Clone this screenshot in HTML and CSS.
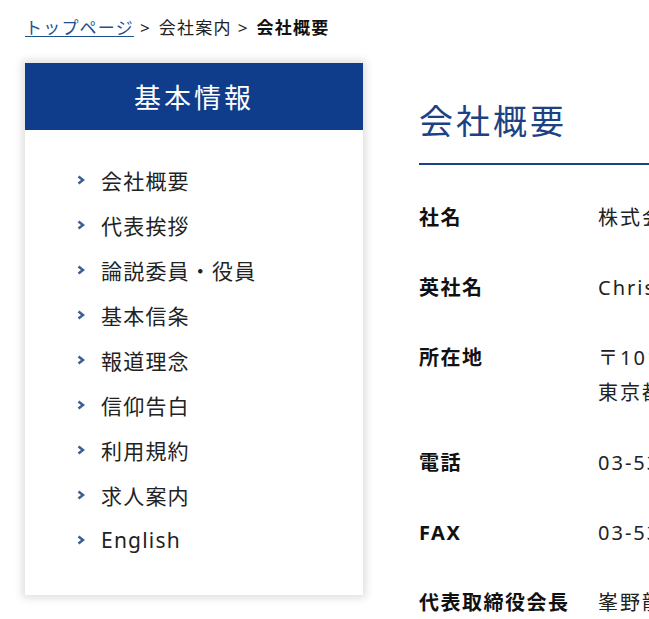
FILE: index.html
```html
<!DOCTYPE html>
<html lang="ja">
<head>
<meta charset="utf-8">
<title>会社概要</title>
<link rel="stylesheet" href="styles.css">
</head>
<body>
<div class="page">
  <nav class="breadcrumb">
    <a href="#" class="crumb-link">トップページ</a><span class="sep">&gt;</span><span>会社案内</span><span class="sep">&gt;</span><strong>会社概要</strong>
  </nav>
  <div class="layout">
    <aside class="sidebar">
      <h2 class="side-title">基本情報</h2>
      <ul class="side-list">
        <li><svg class="chev" viewBox="0 0 8 10"><polyline points="1.5,1.5 6,5 1.5,8.5"/></svg><a href="#">会社概要</a></li>
        <li><svg class="chev" viewBox="0 0 8 10"><polyline points="1.5,1.5 6,5 1.5,8.5"/></svg><a href="#">代表挨拶</a></li>
        <li><svg class="chev" viewBox="0 0 8 10"><polyline points="1.5,1.5 6,5 1.5,8.5"/></svg><a href="#">論説委員・役員</a></li>
        <li><svg class="chev" viewBox="0 0 8 10"><polyline points="1.5,1.5 6,5 1.5,8.5"/></svg><a href="#">基本信条</a></li>
        <li><svg class="chev" viewBox="0 0 8 10"><polyline points="1.5,1.5 6,5 1.5,8.5"/></svg><a href="#">報道理念</a></li>
        <li><svg class="chev" viewBox="0 0 8 10"><polyline points="1.5,1.5 6,5 1.5,8.5"/></svg><a href="#">信仰告白</a></li>
        <li><svg class="chev" viewBox="0 0 8 10"><polyline points="1.5,1.5 6,5 1.5,8.5"/></svg><a href="#">利用規約</a></li>
        <li><svg class="chev" viewBox="0 0 8 10"><polyline points="1.5,1.5 6,5 1.5,8.5"/></svg><a href="#">求人案内</a></li>
        <li><svg class="chev" viewBox="0 0 8 10"><polyline points="1.5,1.5 6,5 1.5,8.5"/></svg><a href="#" class="latin">English</a></li>
      </ul>
    </aside>
    <main class="main">
      <h1 class="title">会社概要</h1>
      <dl class="info">
        <div class="row"><dt>社名</dt><dd>株式会社クリスチャン新聞</dd></div>
        <div class="row"><dt>英社名</dt><dd class="latin">Christian Shimbun Co., Ltd.</dd></div>
        <div class="row"><dt>所在地</dt><dd>〒101-0062<br>東京都千代田区神田駿河台2-1</dd></div>
        <div class="row"><dt>電話</dt><dd>03-5341-6911</dd></div>
        <div class="row"><dt>FAX</dt><dd>03-5341-6932</dd></div>
        <div class="row"><dt>代表取締役会長</dt><dd>峯野龍弘</dd></div>
      </dl>
    </main>
  </div>
</div>
</body>
</html>
```
FILE: styles.css
```css
html, body {
  margin: 0;
  padding: 0;
  overflow: hidden;
  background: #ffffff;
}
body {
  font-family: "Noto Sans", "Noto Sans CJK JP", sans-serif;
  color: #222222;
}
.page {
  padding: 16px 0 0 25px;
  width: 1100px;
}
.breadcrumb {
  font-size: 17px;
  line-height: 24px;
  letter-spacing: 1.2px;
  color: #222;
  height: 24px;
}
.crumb-link {
  color: #1f4f8f;
  text-decoration: underline;
  text-underline-offset: 2px;
}
.sep {
  margin: 0 8px 0 6px;
}
.breadcrumb strong {
  font-weight: 700;
  color: #111;
}
.layout {
  display: flex;
  align-items: flex-start;
  gap: 56px;
  margin-top: 23px;
}
.sidebar {
  width: 338px;
  flex-shrink: 0;
  background: #fff;
  box-shadow: 0 0 8px 3px rgba(0, 0, 0, 0.13);
}
.side-title {
  margin: 0;
  height: 67px;
  background: #0f3d8c;
  color: #fff;
  font-weight: 400;
  font-size: 27px;
  letter-spacing: 3px;
  display: flex;
  align-items: center;
  justify-content: center;
}
.side-list {
  list-style: none;
  margin: 0;
  padding: 27px 0 33px 52px;
}
.side-list li {
  display: flex;
  align-items: center;
  height: 45px;
}
.chev {
  width: 8px;
  height: 10px;
  margin-right: 16px;
  fill: none;
  stroke: #3e5f92;
  stroke-width: 2.6;
}
.side-list a {
  color: #222;
  text-decoration: none;
  font-size: 21px;
  letter-spacing: 1.2px;
}
.main {
  width: 640px;
  flex-shrink: 0;
}
.title {
  margin: 34px 0 0;
  padding-bottom: 18px;
  font-size: 34px;
  line-height: 48px;
  font-weight: 400;
  color: #1d4283;
  letter-spacing: 3px;
  border-bottom: 2px solid #1d4283;
}
.info {
  margin: 18px 0 0;
}
.row {
  display: flex;
  padding: 17px 0 18px;
  font-size: 20px;
  line-height: 35px;
  letter-spacing: 1.5px;
}
.row dt {
  width: 179px;
  flex-shrink: 0;
  font-weight: 700;
  color: #111;
}
.row dd {
  margin: 0;
  color: #222;
  letter-spacing: 2px;
}
```
